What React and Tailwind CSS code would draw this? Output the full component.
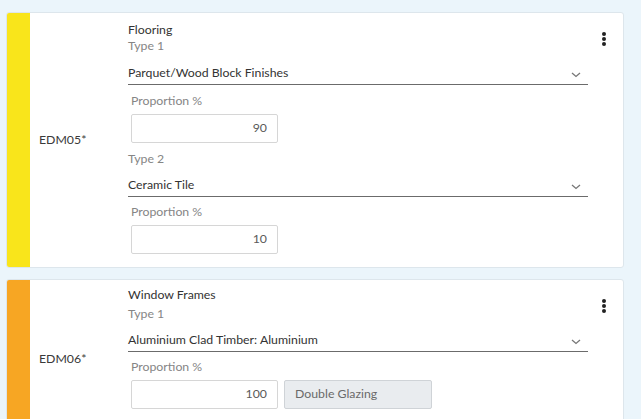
import React from "react";

const Kebab = () => (
  <div className="flex flex-col items-center gap-[1.5px] pt-[19px] pr-[3px]">
    <span className="block w-[3.5px] h-[3.5px] rounded-full bg-[#222]" />
    <span className="block w-[3.5px] h-[3.5px] rounded-full bg-[#222]" />
    <span className="block w-[3.5px] h-[3.5px] rounded-full bg-[#222]" />
  </div>
);

const Chevron = () => (
  <svg width="10" height="6" viewBox="0 0 10 6" className="mr-[7px] mt-[2px]">
    <path d="M1 1l4 3.5L9 1" fill="none" stroke="#777" strokeWidth="1.3" />
  </svg>
);

const Select = ({ value, className = "" }) => (
  <div className={`flex items-center justify-between h-[22px] border-b border-[#6b6b6b] text-[12.3px] text-[#333] ${className}`}>
    <span>{value}</span>
    <Chevron />
  </div>
);

const Proportion = ({ value, extra, className = "" }) => (
  <div className={`pl-[3px] ${className}`}>
    <div className="text-[12.3px] leading-4 text-[#858585]">Proportion %</div>
    <div className="flex gap-[6px] mt-[5px]">
      <div className="w-[147px] h-[29px] border border-[#d6d6d6] rounded-[2px] flex items-center justify-end pr-[10px] text-[12.3px] text-[#5a5a5a]">
        {value}
      </div>
      {extra && (
        <div className="w-[148px] h-[29px] border border-[#cfd3d7] bg-[#e9ecef] rounded-[2px] flex items-center pl-[10px] text-[12.3px] text-[#6a6a6a]">
          {extra}
        </div>
      )}
    </div>
  </div>
);

const Card = ({ color, code, title, children, className = "", bodyClass = "" }) => (
  <div className={`flex w-[618px] bg-white rounded-[3px] border border-[#dde6ec] overflow-hidden ${className}`}>
    <div className={`w-[23px] shrink-0 ${color}`} />
    <div className="w-[98px] shrink-0 flex items-center pl-[9px] text-[12.3px] text-[#3a3a3a]">
      {code}
    </div>
    <div className={`w-[460px] shrink-0 ${bodyClass}`}>
      <div className="text-[12.3px] leading-4 text-[#333]">{title}</div>
      {children}
    </div>
    <div className="flex-1 flex justify-center">
      <Kebab />
    </div>
  </div>
);

export default function App() {
  return (
    <div
      className="w-[641px] h-[419px] overflow-hidden bg-[#ebf5fb] pt-[12px] pl-[6px]"
      style={{ fontFamily: "Lato, 'Open Sans', sans-serif" }}
    >
      <Card color="bg-[#f9e51b]" code="EDM05*" title="Flooring" bodyClass="pt-[9px] pb-[13px]">
        <div className="text-[12.3px] leading-4 text-[#858585]">Type 1</div>
        <Select value="Parquet/Wood Block Finishes" className="mt-[9px]" />
        <Proportion value="90" className="mt-[8px]" />
        <div className="text-[12.3px] leading-4 text-[#858585] mt-[8px]">Type 2</div>
        <Select value="Ceramic Tile" className="mt-[8px]" />
        <Proportion value="10" className="mt-[7px]" />
      </Card>
      <Card color="bg-[#f7a623]" code="EDM06*" title="Window Frames" className="mt-[11px] h-[160px]" bodyClass="pt-[7px]">
        <div className="text-[12.3px] leading-4 text-[#858585] mt-[3px]">Type 1</div>
        <Select value="Aluminium Clad Timber: Aluminium" className="mt-[8px]" />
        <Proportion value="100" extra="Double Glazing" className="mt-[7px]" />
      </Card>
    </div>
  );
}
